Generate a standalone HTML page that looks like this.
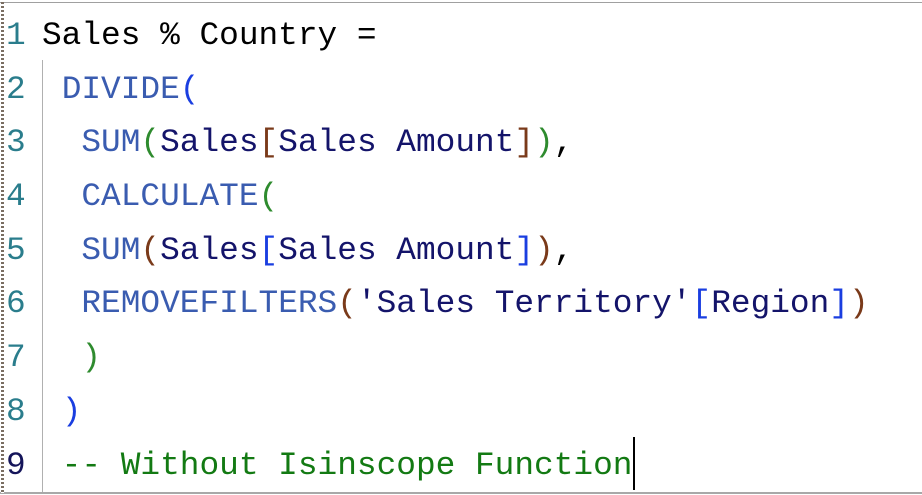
<!DOCTYPE html>
<html><head><style>
html,body{margin:0;padding:0;background:#fff;width:922px;height:495px;overflow:hidden;position:relative}
.bt{position:absolute;left:0;top:2px;width:922px;height:1px;background:#a0a0a0}
.bb{position:absolute;left:0;top:492px;width:922px;height:2px;background:#a8a8a8}
.bl{position:absolute;left:1px;top:2px;width:3px;height:491px;background:repeating-linear-gradient(#7a6e62 0 2px,#fff 2px 4px)}
.guide{position:absolute;left:42px;top:60px;width:1px;height:432px;background:#b0b0b0}
.ln{position:absolute;font-family:"Liberation Mono",monospace;font-size:32.8px;white-space:pre;line-height:54px;}
.num{left:6px;color:#2a7d8c}
.code{left:42px;}
.k{color:#3a5cb0}.i{color:#14146a}.b{color:#7a3a1a}.g{color:#2e8b2e}.bl2{color:#1a3ee0}.c{color:#137a13}.t{color:#000}
.cur{position:absolute;left:633px;top:437px;width:2px;height:53px;background:#000}
</style></head><body>
<div class="bt"></div><div class="bb"></div><div class="bl"></div><div class="guide"></div>
<div class="ln num" style="top:9px">1</div>
<div class="ln num" style="top:63px">2</div>
<div class="ln num" style="top:116px">3</div>
<div class="ln num" style="top:170px">4</div>
<div class="ln num" style="top:224px">5</div>
<div class="ln num" style="top:277px">6</div>
<div class="ln num" style="top:331px">7</div>
<div class="ln num" style="top:385px">8</div>
<div class="ln num" style="top:439px;color:#14145a">9</div>
<div class="ln code t" style="top:9px">Sales % Country =</div>
<div class="ln code" style="top:63px"> <span class="k">DIVIDE</span><span class="bl2">(</span></div>
<div class="ln code" style="top:116px">  <span class="k">SUM</span><span class="g">(</span><span class="i">Sales</span><span class="b">[</span><span class="i">Sales Amount</span><span class="b">]</span><span class="g">)</span><span class="t">,</span></div>
<div class="ln code" style="top:170px">  <span class="k">CALCULATE</span><span class="g">(</span></div>
<div class="ln code" style="top:224px">  <span class="k">SUM</span><span class="b">(</span><span class="i">Sales</span><span class="bl2">[</span><span class="i">Sales Amount</span><span class="bl2">]</span><span class="b">)</span><span class="t">,</span></div>
<div class="ln code" style="top:277px">  <span class="k">REMOVEFILTERS</span><span class="b">(</span><span class="i">'Sales Territory'</span><span class="bl2">[</span><span class="i">Region</span><span class="bl2">]</span><span class="b">)</span></div>
<div class="ln code" style="top:331px">  <span class="g">)</span></div>
<div class="ln code" style="top:385px"> <span class="bl2">)</span></div>
<div class="ln code c" style="top:439px"> -- Without Isinscope Function</div>
<div class="cur"></div>
</body></html>
